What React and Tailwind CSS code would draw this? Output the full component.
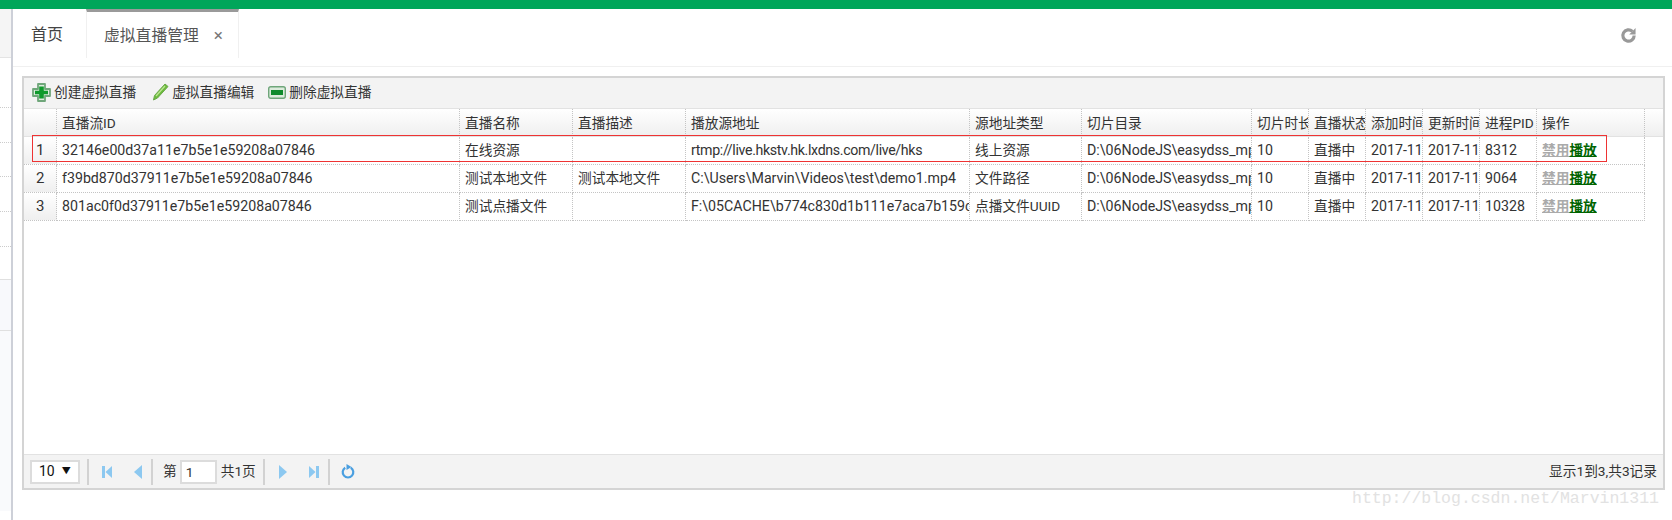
const font = 'Roboto, "Noto Sans CJK SC", sans-serif';

// latin columns run a touch wider than the CJK ones in the reference
const columns = [
  { title: '直播流ID', width: 403, latin: true },
  { title: '直播名称', width: 113 },
  { title: '直播描述', width: 113 },
  { title: '播放源地址', width: 284, latin: true },
  { title: '源地址类型', width: 112 },
  { title: '切片目录', width: 170, latin: true },
  { title: '切片时长', width: 57, latin: true },
  { title: '直播状态', width: 57 },
  { title: '添加时间', width: 57, latin: true },
  { title: '更新时间', width: 57, latin: true },
  { title: '进程PID', width: 57, latin: true },
  { title: '操作', width: 108 },
];

const rows = [
  ['32146e00d37a11e7b5e1e59208a07846', '在线资源', '', 'rtmp://live.hkstv.hk.lxdns.com/live/hks', '线上资源', 'D:\\06NodeJS\\easydss_mpegts', '10', '直播中', '2017-11-20', '2017-11-20', '8312'],
  ['f39bd870d37911e7b5e1e59208a07846', '测试本地文件', '测试本地文件', 'C:\\Users\\Marvin\\Videos\\test\\demo1.mp4', '文件路径', 'D:\\06NodeJS\\easydss_mpegts', '10', '直播中', '2017-11-20', '2017-11-20', '9064'],
  ['801ac0f0d37911e7b5e1e59208a07846', '测试点播文件', '', 'F:\\05CACHE\\b774c830d1b111e7aca7b159c0a1', '点播文件UUID', 'D:\\06NodeJS\\easydss_mpegts', '10', '直播中', '2017-11-20', '2017-11-20', '10328'],
];

const Sep = () => <div className="w-[2px] h-[26px] bg-[#d2d2d2]" />;

const PlusIcon = () => (
  <svg width="19" height="19" viewBox="0 0 19 19">
    <path d="M6 1h7v5h5v7h-5v5H6v-5H1V6h5z" fill="#dcebdc" stroke="#6fa67a" strokeWidth="1.800" strokeLinejoin="round" />
    <path d="M7.200 3.500h4.600v4.200H16v3.600h-4.200v4.200H7.200v-4.200H3V7.700h4.200z" fill="#0f9a2c" />
  </svg>
);

const PencilIcon = () => (
  <svg width="17" height="18" viewBox="0 0 17 18">
    <path d="M13 1l3 2.500L5.500 15 1.500 17l1-4.500z" fill="#6cbb3c" stroke="#6aa84a" strokeWidth="1" strokeLinejoin="round" />
    <path d="M13 3L4 13" stroke="#bce694" strokeWidth="1.200" />
  </svg>
);

const MinusIcon = () => (
  <svg width="18" height="13" viewBox="0 0 18 13">
    <rect x="0.700" y="0.700" width="16.600" height="11.600" rx="2" fill="#dcebdc" stroke="#6fa67a" strokeWidth="1.400" />
    <rect x="3" y="4" width="12" height="5" fill="#0f8a2c" />
  </svg>
);

const PageIcon = ({ dir, end }) => (
  <svg width="11" height="14" viewBox="0 0 11 14" className={dir === 'next' ? 'rotate-180' : ''}>
    {end && <rect x="0" y="1" width="3" height="12" fill="#8cc8f0" />}
    <path d={end ? 'M10 1v12L3.500 7z' : 'M10 0v14L2 7z'} fill="#8cc8f0" />
  </svg>
);

const ReloadIcon = () => (
  <svg width="14" height="15" viewBox="0 0 14 15">
    <path d="M4.200 3.700a5.300 5.300 0 1 0 5.600 0" fill="none" stroke="#4a9fe0" strokeWidth="2.200" />
    <path d="M5.500 0v6L10.500 3z" fill="#4a9fe0" />
  </svg>
);

function Cell({ width, children, className = '' }) {
  return (
    <div
      style={{ width }}
      className={`shrink-0 overflow-hidden whitespace-nowrap pl-[5px] border-r border-dotted border-[#c4c4c4] ${className}`}
    >
      {children}
    </div>
  );
}

export default function App() {
  return (
    <div style={{ fontFamily: font }} className="relative w-[1672px] h-[520px] overflow-hidden bg-white text-[13.7px] text-[#333]">
      <div className="h-[9px] bg-[#00a65a]" />

      <div className="flex h-[511px]">
        {/* slim sidebar */}
        <div className="w-[13px] shrink-0 bg-white border-r-2 border-[#cdd0d8]">
          <div className="h-[49px] bg-[#f5f5f5] border-b border-[#e4e4e4]" />
          <div className="h-[50px] border-b border-dotted border-[#ccc]" />
          <div className="h-[35px] border-b border-dotted border-[#ccc]" />
          <div className="h-[34px] border-b border-dotted border-[#ccc]" />
          <div className="h-[35px] border-b border-dotted border-[#ccc]" />
          <div className="h-[35px] border-b border-dotted border-[#ccc]" />
          <div className="h-[33px] border-b border-[#e0e0e0]" />
          <div className="h-[51px] bg-[#f8f9fc] border-b border-[#e0e0e0]" />
          <div className="h-[180px] bg-[#f9fafc]" />
        </div>

        <div className="flex-1 min-w-0">
          {/* tabs */}
          <div className="flex items-center h-[49px]">
            <div className="w-[73px] pl-[18px] pt-[3px] text-[16px] text-[#444]">首页</div>
            <div className="w-[153px] h-[49px] border-t-[3px] border-[#9a9a9a] border-r border-l border-r-[#f0f0f0] border-l-[#f0f0f0] pl-[17px] pt-[1px] flex items-center text-[#555] text-[15.800px]">
              <span>虚拟直播管理</span>
              <span className="ml-[15px] text-[#777] text-[17px]">×</span>
            </div>
            <svg width="17" height="17" viewBox="0 0 24 24" className="ml-auto mr-[35px] mt-[3px]" fill="none" stroke="#999" strokeWidth="4.500">
              <path d="M20 12a8 8 0 1 1-2.500-5.800" />
              <path d="M22 1.500v9h-9z" fill="#999" strokeWidth="0" />
            </svg>
          </div>
          <div className="h-px bg-[#f0f0f0] mt-[8px]" />

          {/* grid panel */}
          <div className="ml-[9px] mt-[9px] w-[1643px] h-[414px] border-2 border-[#d4d4d4] flex flex-col">
            <div className="h-[31px] shrink-0 bg-[#f3f3f3] flex items-center pl-[8px] pb-[2px] border-b border-[#e2e2e2]">
              <PlusIcon />
              <span className="ml-[3px]">创建虚拟直播</span>
              <span className="ml-[16px]"><PencilIcon /></span>
              <span className="ml-[3px]">虚拟直播编辑</span>
              <span className="ml-[14px]"><MinusIcon /></span>
              <span className="ml-[3px]">删除虚拟直播</span>
            </div>

            <div className="flex-1 min-h-0">
              <div className="flex h-[28px] leading-[28px] bg-gradient-to-b from-white to-[#efefef] border-b border-[#e2e2e2]">
                <Cell width={33} />
                {columns.map((col) => (
                  <Cell key={col.title} width={col.width}>{col.title}</Cell>
                ))}
              </div>
              {rows.map((row, i) => (
                <div key={row[0]} className="flex h-[28px] leading-[27px]">
                  <Cell width={33} className="border-b bg-gradient-to-b from-white to-[#efefef] pl-[12px] text-[15px]">{i + 1}</Cell>
                  {row.map((val, j) => (
                    <Cell
                      key={j}
                      width={columns[j].width}
                      className={`border-b ${columns[j].latin ? 'text-[14.2px]' : ''} ${val.startsWith('rtmp') ? 'tracking-[-0.35px]' : ''}`}
                    >
                      {val}
                    </Cell>
                  ))}
                  <Cell width={108} className="border-b">
                    <span className="underline font-bold text-[#aaa]">禁用</span>
                    <span className="underline font-bold text-[#006400]">播放</span>
                  </Cell>
                </div>
              ))}
            </div>

            {/* pager */}
            <div className="h-[34px] shrink-0 bg-[#f3f3f3] border-t border-[#e2e2e2] flex items-center pl-[6px] pr-[6px]">
              <div className="w-[50px] h-[24px] bg-white border-2 border-[#dcdcdc] flex items-center pl-[7px] text-[#111] text-[14px]">
                10<span className="ml-[7px] text-[9px]">▼</span>
              </div>
              <div className="ml-[7px]"><Sep /></div>
              <div className="ml-[13px]"><PageIcon end /></div>
              <div className="ml-[19px]"><PageIcon /></div>
              <div className="ml-[8px]"><Sep /></div>
              <span className="ml-[10px]">第</span>
              <div className="ml-[3px] w-[37px] h-[24px] bg-white border-2 border-[#dcdcdc] pl-[4px] leading-[20px] text-[#333]">1</div>
              <span className="ml-[4px]">共1页</span>
              <div className="ml-[7px]"><Sep /></div>
              <div className="ml-[13px]"><PageIcon dir="next" /></div>
              <div className="ml-[19px]"><PageIcon dir="next" end /></div>
              <div className="ml-[9px]"><Sep /></div>
              <div className="ml-[11px]"><ReloadIcon /></div>
              <span className="ml-auto">显示1到3,共3记录</span>
            </div>
          </div>
        </div>
      </div>

      {/* red annotation box */}
      <div className="absolute left-[32px] top-[135px] w-[1575px] h-[27px] border border-[#ee3333]" />
      {/* blog watermark */}
      <div className="absolute left-[1352px] top-[487px] text-[#e2e2e2] text-[16.500px] font-['Liberation_Mono',monospace]">http://blog.csdn.net/Marvin1311</div>
    </div>
  );
}
